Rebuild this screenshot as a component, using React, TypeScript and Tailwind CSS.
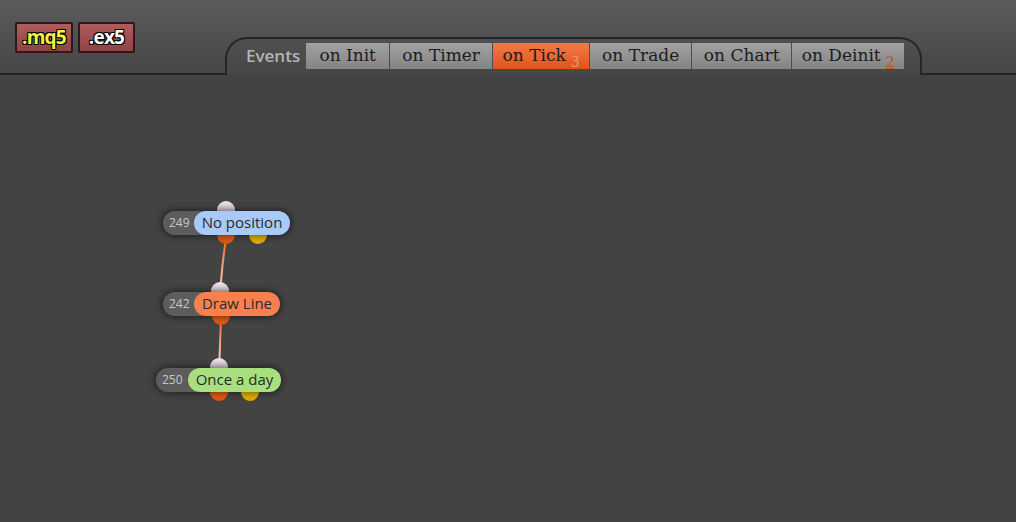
import React from 'react';

const tabs = [
  { label: 'on Init', w: 84 },
  { label: 'on Timer', w: 103 },
  { label: 'on Tick', w: 97, active: true, count: '3' },
  { label: 'on Trade', w: 102 },
  { label: 'on Chart', w: 100 },
  { label: 'on Deinit', w: 113, count: '2' },
];

const nodes = [
  { id: '249', label: 'No position', x: 163, y: 211, idW: 31, w: 96, bg: 'bg-[#a9c9f9]', inX: 63, outs: [63, 95] },
  { id: '242', label: 'Draw Line', x: 163, y: 292, idW: 31, w: 86, bg: 'bg-[#f8804f]', inX: 57, outs: [58] },
  { id: '250', label: 'Once a day', x: 156, y: 368, idW: 32, w: 93, bg: 'bg-[#a8e07f]', inX: 63, outs: [63, 94] },
];

function Badge({ text, yellow, w }: { text: string; yellow?: boolean; w: number }) {
  return (
    <div
      className={`h-[31px] flex items-center justify-center border-2 border-[#2a1a1a] bg-gradient-to-b from-[#b05c5c] to-[#8e4444] rounded-[2px] font-bold text-[19px] tracking-[-0.04em] ${
        yellow ? 'text-[#f4f43c]' : 'text-white'
      }`}
      style={{ width: w, fontFamily: '"Open Sans", sans-serif', textShadow: '-1px -1px 0 #000, 1px -1px 0 #000, -1px 1px 0 #000, 1px 1px 0 #000' }}
    >
      {text}
    </div>
  );
}

function Node({ n }: { n: (typeof nodes)[number] }) {
  return (
    <div className="absolute" style={{ left: n.x, top: n.y }}>
      {/* input pin */}
      <div
        className="absolute w-[18px] h-[18px] rounded-full bg-gradient-to-b from-[#efe4ec] to-[#c9b6c6]"
        style={{ left: n.inX - 9, top: -10 }}
      />
      {n.outs.map((ox, i) => (
        <div
          key={i}
          className={`absolute w-[18px] h-[18px] rounded-full ${
            i === 0 ? 'bg-gradient-to-b from-[#f26a1c] to-[#e05410]' : 'bg-gradient-to-b from-[#f4c400] to-[#e0a800]'
          }`}
          style={{ left: ox - 9, top: 15 }}
        />
      ))}
      <div className="relative flex h-[24px] rounded-full shadow-[0_0_6px_2px_rgba(0,0,0,0.45)]">
        <div
          className="h-full bg-[#5c5c5c] rounded-l-full pl-[6px] -mr-[8px] flex items-center text-[12px] text-[#c8c8c8]"
          style={{ width: n.idW + 8, fontFamily: '"Open Sans", sans-serif' }}
        >
          {n.id}
        </div>
        <div
          className={`h-full ${n.bg} rounded-full flex items-center justify-center pb-[2px] text-[15px] text-[#2a2a2a]`}
          style={{ width: n.w, fontFamily: '"Open Sans", sans-serif' }}
        >
          {n.label}
        </div>
      </div>
    </div>
  );
}

export default function App() {
  return (
    <div className="w-[1016px] h-[522px] bg-[#434343] overflow-hidden flex flex-col">
      <div className="h-[75px] flex bg-gradient-to-b from-[#5b5b5b] to-[#464646]">
        <div className="w-[225px] border-b-2 border-[#252525] flex items-start gap-[5px] pl-[15px] pt-[22px]">
          <Badge text=".mq5" yellow w={58} />
          <Badge text=".ex5" w={57} />
        </div>
        <div className="mt-[37px] w-[697px] h-[38px] rounded-t-[22px] border-2 border-b-0 border-[#252525] flex items-start pt-[4px] pl-[19px]">
          <span
            className="text-[17px] font-semibold text-[#b4b4b4] mr-[6px] leading-[26px]"
            style={{ fontFamily: '"Open Sans", sans-serif' }}
          >
            Events
          </span>
          {tabs.map((t) => (
            <div
              key={t.label}
              className={`h-[26px] flex items-center justify-center border-r border-[#4e4e4e] text-[#1c1c1c] ${
                t.active
                  ? 'bg-gradient-to-b from-[#f47a44] to-[#e2521a]'
                  : 'bg-gradient-to-b from-[#a2a2a2] to-[#848484]'
              }`}
              style={{ width: t.w, fontFamily: '"DejaVu Serif", Georgia, serif', fontSize: 17 }}
            >
              {t.label}
              {t.count && (
                <span
                  className={`ml-[5px] text-[14px] relative top-[6px] ${
                    t.active ? 'text-[#f2996e]' : 'text-[#b8552a] underline'
                  }`}
                >
                  {t.count}
                </span>
              )}
            </div>
          ))}
        </div>
        <div className="flex-1 border-b-2 border-[#252525]" />
      </div>
      <div className="relative flex-1">
        <svg className="absolute left-0 top-0" width="1016" height="447" viewBox="0 75 1016 447">
          <defs>
            <linearGradient id="g1" x1="0" y1="0" x2="0" y2="1">
              <stop offset="0" stopColor="#f26a1c" />
              <stop offset="1" stopColor="#f4e0e8" />
            </linearGradient>
          </defs>
          <path d="M226 240 C 222 262, 222 272, 220 294" stroke="url(#g1)" strokeWidth="2" fill="none" />
          <path d="M221 320 C 220 340, 220 350, 219 368" stroke="url(#g1)" strokeWidth="2" fill="none" />
        </svg>
        <div className="absolute left-0 -top-[75px]">
          {nodes.map((n) => (
            <Node key={n.id} n={n} />
          ))}
        </div>
      </div>
    </div>
  );
}
